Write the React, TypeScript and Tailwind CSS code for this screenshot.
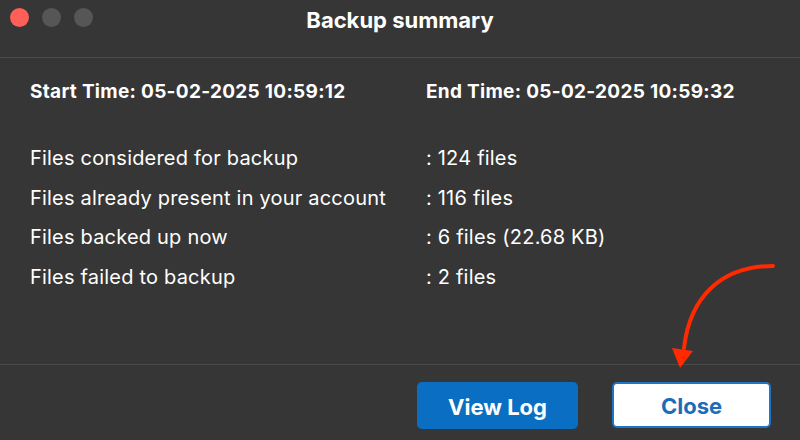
export default function App() {
  const rows = [
    ["Files considered for backup", ": 124 files"],
    ["Files already present in your account", ": 116 files"],
    ["Files backed up now", ": 6 files (22.68 KB)"],
    ["Files failed to backup", ": 2 files"],
  ];

  return (
    <div
      className="relative w-[800px] h-[440px] bg-[#363636] text-white flex flex-col overflow-hidden"
      style={{ fontFamily: "Inter, 'Liberation Sans', sans-serif" }}
    >
      {/* Title bar */}
      <div className="relative h-[58px] shrink-0 border-b border-[#4a4a4a] flex items-center justify-center">
        <div className="absolute left-[10px] top-[8px] flex gap-[13px]">
          <span className="w-[19px] h-[19px] rounded-full bg-[#fe5f57]" />
          <span className="w-[19px] h-[19px] rounded-full bg-[#565656]" />
          <span className="w-[19px] h-[19px] rounded-full bg-[#565656]" />
        </div>
        <h1 className="text-[22px] font-bold -mt-[17px]">Backup summary</h1>
      </div>

      {/* Content */}
      <div className="flex-1 pl-[30px] pt-[20px]">
        <div className="grid grid-cols-[396px_1fr] text-[19px] leading-[28px] tracking-[0.3px] font-bold">
          <div>Start Time: 05-02-2025 10:59:12</div>
          <div>End Time: 05-02-2025 10:59:32</div>
        </div>
        <div className="mt-[38px] grid grid-cols-[396px_1fr] gap-y-[11.5px] text-[20px] leading-[28px] tracking-[0.2px]">
          {rows.map(([label, value]) => (
            <div key={label} className="contents">
              <div>{label}</div>
              <div>{value}</div>
            </div>
          ))}
        </div>
      </div>

      {/* Footer */}
      <div className="h-[76px] shrink-0 border-t border-[#4a4a4a] flex items-start justify-end gap-[34px] pr-[29px] pt-[17px]">
        <button className="w-[161px] h-[47px] pt-[3px] rounded-[5px] bg-[#0a6fc2] text-white text-[22px] font-bold">
          View Log
        </button>
        <button className="w-[159px] h-[46px] pt-[3px] rounded-[5px] bg-white border-2 border-[#1f74c4] text-[#1c6db8] text-[22px] font-bold">
          Close
        </button>
      </div>

      {/* Annotation arrow */}
      <svg className="absolute left-0 top-0 pointer-events-none" width="800" height="440">
        <path d="M773 266 C 722 266 690 296 684 348" fill="none" stroke="#ff2a00" strokeWidth="4" strokeLinecap="round" />
        <polygon points="672,348 693,351 680,368" fill="#ff2a00" />
      </svg>
    </div>
  );
}
